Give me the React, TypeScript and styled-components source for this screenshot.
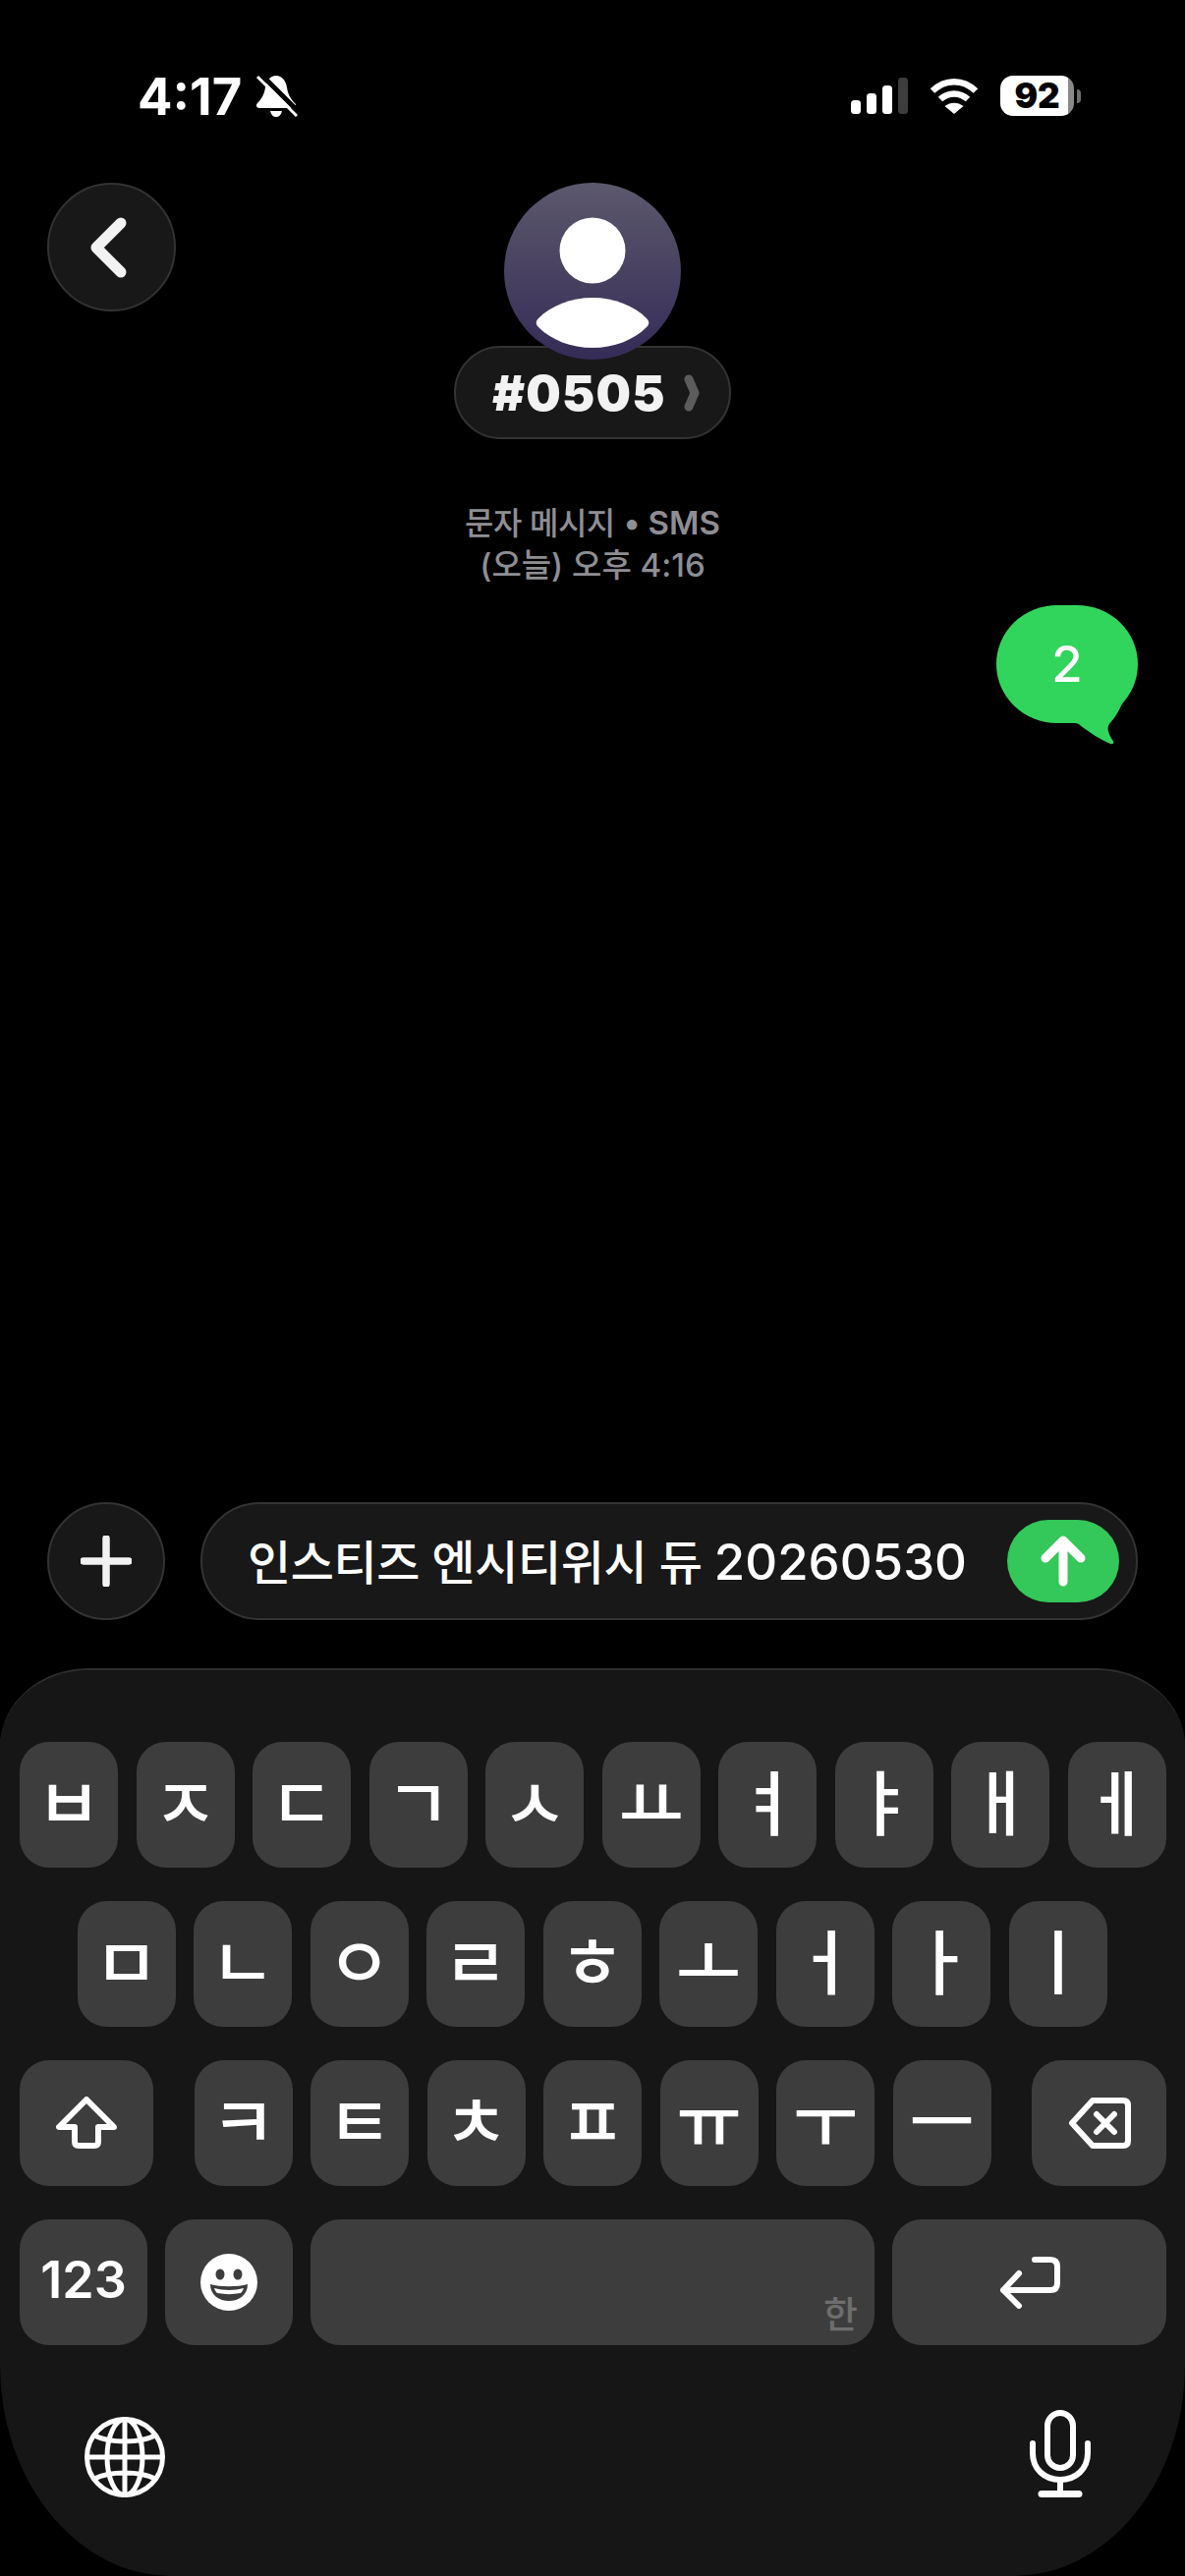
import styled, { createGlobalStyle } from "styled-components";

const row1 = ["ㅂ", "ㅈ", "ㄷ", "ㄱ", "ㅅ", "ㅛ", "ㅕ", "ㅑ", "ㅐ", "ㅔ"];
const row2 = ["ㅁ", "ㄴ", "ㅇ", "ㄹ", "ㅎ", "ㅗ", "ㅓ", "ㅏ", "ㅣ"];
const row3 = ["ㅋ", "ㅌ", "ㅊ", "ㅍ", "ㅠ", "ㅜ", "ㅡ"];

export default function App() {
    return (
        <>
            <GlobalStyle />
            <Page>
                <StatusBar>
                    <StatusLeft>
                        <Clock>4:17</Clock>
                        <svg width="44" height="44" viewBox="0 0 44 44">
                            <path fill="#fff" d="M22 1C28 1 32 6 33 13C34 20 37 25 41 29C43 31 42 34 39 34H5C2 34 1 31 3 29C7 25 10 20 11 13C12 6 16 1 22 1Z" />
                            <path fill="#fff" d="M16 37H28C27 41 25 43 22 43C19 43 17 41 16 37Z" />
                            <path stroke="#000" strokeWidth="5" d="M7 0L48 41" />
                            <path stroke="#fff" strokeWidth="3" d="M3 2L43 42" />
                        </svg>
                    </StatusLeft>
                    <StatusRight>
                        <svg width="58" height="37" viewBox="0 0 58 37">
                            <rect x="0" y="23" width="10" height="14" rx="3.5" fill="#fff" />
                            <rect x="16" y="16" width="10" height="21" rx="3.5" fill="#fff" />
                            <rect x="32" y="8" width="10" height="29" rx="3.5" fill="#fff" />
                            <rect x="48" y="0" width="10" height="37" rx="3.5" fill="#3d3d3d" />
                        </svg>
                        <svg width="50" height="37" viewBox="0 0 50 37">
                            <path fill="none" stroke="#fff" strokeWidth="6.5" d="M3 13.5C16 1 34 1 47 13.5" />
                            <path fill="none" stroke="#fff" strokeWidth="6.5" d="M11 22C19 14.500 31 14.500 39 22" />
                            <path fill="#fff" d="M25 37L15.500 29C21 24.500 29 24.500 34.500 29Z" />
                        </svg>
                        <Battery>
                            <BatteryBody>92</BatteryBody>
                            <BatteryCap />
                        </Battery>
                    </StatusRight>
                </StatusBar>

                <Header>
                    <RoundButton $size={131}>
                        <svg width="48" height="72" viewBox="0 0 48 72">
                            <path d="M33 11L8 36L33 61" fill="none" stroke="#f2f2f2" strokeWidth="11" strokeLinecap="round" strokeLinejoin="round" />
                        </svg>
                    </RoundButton>
                    <Contact>
                        <Avatar>
                            <svg width="180" height="180" viewBox="0 0 180 180">
                                <circle cx="90" cy="69" r="33.500" fill="#fff" />
                                <path fill="#fff" d="M35 138C48 125 68 117 90 117C112 117 132 125 145 138C148 141 148 144 145 147C132 160 112 168 90 168C68 168 48 160 35 147C32 144 32 141 35 138Z" />
                            </svg>
                        </Avatar>
                        <NamePill>
                            <Name>#0505</Name>
                            <svg width="16" height="38" viewBox="0 0 16 38">
                                <path d="M5 5L11 19L5 33" fill="none" stroke="#5c5c5c" strokeWidth="9" strokeLinecap="round" strokeLinejoin="round" />
                            </svg>
                        </NamePill>
                    </Contact>
                    <span />
                </Header>

                <Thread>
                    <Meta>
                        <MetaHangul>문자 메시지</MetaHangul> <MetaBold>• SMS</MetaBold>
                        <br />
                        (오늘) 오후 4:16
                    </Meta>
                    <Bubble>
                        2
                        <BubbleTail width="60" height="60" viewBox="0 0 60 60">
                            <path fill="#32d55c" d="M0 20V23H9C11 23.500 12 24 13 25C22 32 34 40 44 44C47 45 48 43 47 41.500C42 34 40 28 43 24C46 20 50 17 57 1L20 0Z" />
                        </BubbleTail>
                    </Bubble>
                </Thread>

                <Composer>
                    <RoundButton $size={120}>
                        <svg width="52" height="52" viewBox="0 0 52 52">
                            <path d="M26 3V49M3 26H49" fill="none" stroke="#f2f2f2" strokeWidth="7.500" strokeLinecap="round" />
                        </svg>
                    </RoundButton>
                    <InputBox>
                        <InputText>
                            <InputHangul>인스티즈 엔시티위시 듀 </InputHangul>20260530
                        </InputText>
                        <SendButton>
                            <svg width="46" height="52" viewBox="0 0 46 52">
                                <path d="M23 47V6M5 23L23 5L41 23" fill="none" stroke="#fff" strokeWidth="9" strokeLinecap="round" strokeLinejoin="round" />
                            </svg>
                        </SendButton>
                    </InputBox>
                </Composer>

                <Keyboard>
                    <KeyRows>
                        <KeyRow>
                            {row1.map((k) => (
                                <Key key={k}><Jamo>{k}</Jamo></Key>
                            ))}
                        </KeyRow>
                        <KeyRow $center>
                            {row2.map((k) => (
                                <Key key={k}><Jamo>{k}</Jamo></Key>
                            ))}
                        </KeyRow>
                        <KeyRow>
                            <Key $w={136}>
                                <svg width="62" height="54" viewBox="0 0 62 54">
                                    <path d="M31 3L3 31H19V46Q19 50 23 50H39Q43 50 43 46V31H59Z" fill="none" stroke="#fff" strokeWidth="6" strokeLinejoin="round" />
                                </svg>
                            </Key>
                            <KeyGroup>
                                {row3.map((k) => (
                                    <Key key={k}><Jamo>{k}</Jamo></Key>
                                ))}
                            </KeyGroup>
                            <Key $w={137}>
                                <svg width="64" height="54" viewBox="0 0 64 54">
                                    <path d="M4 27L25 4H56Q61 4 61 9V45Q61 50 56 50H25Z" fill="none" stroke="#fff" strokeWidth="6" strokeLinejoin="round" />
                                    <path d="M29 18L47 36M47 18L29 36" fill="none" stroke="#fff" strokeWidth="6" strokeLinecap="round" />
                                </svg>
                            </Key>
                        </KeyRow>
                        <KeyRow>
                            <Key $w={130}><KeyLabel>123</KeyLabel></Key>
                            <Key $w={130}>
                                <svg width="58" height="58" viewBox="0 0 58 58">
                                    <circle cx="29" cy="29" r="29" fill="#fff" />
                                    <ellipse cx="20" cy="21" rx="4.500" ry="5.500" fill="#3c3c3c" />
                                    <ellipse cx="38" cy="21" rx="4.500" ry="5.500" fill="#3c3c3c" />
                                    <path d="M10 31C20 34 38 34 48 31C48 42 39 48 29 48C19 48 10 42 10 31Z" fill="#3c3c3c" />
                                    <path d="M14 35C23 37.500 35 37.500 44 35C43 38 42 39 41 40C33 41.500 25 41.500 17 40C16 39 15 38 14 35Z" fill="#fff" />
                                </svg>
                            </Key>
                            <SpaceKey $w={574}>한</SpaceKey>
                            <Key $w={279}>
                                <svg width="64" height="54" viewBox="0 0 64 54">
                                    <path d="M37 4H53Q60 4 60 11V28Q60 35 53 35H5M21 18L5 35L21 51" fill="none" stroke="#fff" strokeWidth="6" strokeLinecap="round" strokeLinejoin="round" />
                                </svg>
                            </Key>
                        </KeyRow>
                    </KeyRows>
                    <KeyboardFooter>
                        <svg width="82" height="82" viewBox="0 0 82 82">
                            <g fill="none" stroke="#fff" strokeWidth="5">
                                <circle cx="41" cy="41" r="38.500" />
                                <ellipse cx="41" cy="41" rx="18" ry="38.500" />
                                <path d="M41 3V79M3 41H79M10 19C26 27 56 27 72 19M10 63C26 55 56 55 72 63" />
                            </g>
                        </svg>
                        <svg width="62" height="89" viewBox="0 0 62 89">
                            <g fill="none" stroke="#fff" strokeWidth="6" strokeLinecap="round">
                                <rect x="18" y="3" width="26" height="56" rx="13" />
                                <path d="M3 34V44C3 60 15 71 31 71C47 71 59 60 59 44V34" />
                                <path d="M31 71V84" />
                                <path d="M12 85.500H50" strokeWidth="7" />
                            </g>
                        </svg>
                    </KeyboardFooter>
                </Keyboard>
            </Page>
        </>
    );
}

const GlobalStyle = createGlobalStyle`
    html, body {
        margin: 0;
        padding: 0;
        background: #000;
    }
    * {
        box-sizing: border-box;
    }
`;

const sans = `Inter, "Noto Sans CJK KR", sans-serif`;

const Page = styled.div`
    width: 1206px;
    height: 2622px;
    display: flex;
    flex-direction: column;
    overflow: hidden;
    background: #000;
    color: #fff;
    font-family: ${sans};
`;

const StatusBar = styled.div`
    height: 186px;
    padding: 74px 106px 0 140px;
    display: flex;
    justify-content: space-between;
    align-items: flex-start;
`;

const StatusLeft = styled.div`
    display: flex;
    align-items: center;
    gap: 13px;
`;

const Clock = styled.div`
    font-size: 52.5px;
    line-height: 48px;
    font-weight: 700;
`;

const StatusRight = styled.div`
    display: flex;
    align-items: center;
    gap: 22px;
    padding-top: 3px;
`;

const Battery = styled.div`
    display: flex;
    align-items: center;
    gap: 3px;
`;

const BatteryBody = styled.div`
    width: 75px;
    height: 41px;
    border-radius: 13px;
    background: linear-gradient(90deg, #fff 92%, #8a8a8a 92%);
    color: #000;
    font-size: 35px;
    line-height: 41px;
    font-weight: 900;
    text-align: center;
`;

const BatteryCap = styled.div`
    width: 4px;
    height: 14px;
    border-radius: 0 4px 4px 0;
    background: #6e6e6e;
`;

const Header = styled.div`
    padding: 0 48px;
    display: grid;
    grid-template-columns: 131px 1fr 131px;
    align-items: start;
`;

const RoundButton = styled.div<{ $size: number }>`
    width: ${({ $size }) => $size}px;
    height: ${({ $size }) => $size}px;
    flex: none;
    border-radius: 50%;
    background: #181818;
    border: 2px solid #333;
    display: flex;
    align-items: center;
    justify-content: center;
`;

const Contact = styled.div`
    display: flex;
    flex-direction: column;
    align-items: center;
`;

const Avatar = styled.div`
    width: 180px;
    height: 180px;
    border-radius: 50%;
    background: linear-gradient(180deg, #5c586c 0%, #352c57 100%);
    position: relative;
    z-index: 1;
    overflow: hidden;
`;

const NamePill = styled.div`
    width: 282px;
    height: 95px;
    margin-top: -14px;
    border-radius: 48px;
    background: #181818;
    border: 2px solid #333;
    padding: 0 30px 0 37px;
    display: flex;
    align-items: center;
    justify-content: space-between;
`;

const Name = styled.div`
    font-size: 50px;
    line-height: 1;
    font-weight: 900;
    letter-spacing: 1.2px;
    color: #f2f2f2;
`;

const Thread = styled.div`
    flex: 1;
    display: flex;
    flex-direction: column;
    padding: 64px 48px 0;
`;

const Meta = styled.div`
    font-size: 33px;
    line-height: 43px;
    font-weight: 500;
    color: #8e8e93;
    text-align: center;
`;

const MetaHangul = styled.span`
    font-size: 32px;
    letter-spacing: -0.5px;
`;

const MetaBold = styled.span`
    font-weight: 600;
`;

const Bubble = styled.div`
    align-self: flex-end;
    position: relative;
    margin-top: 19px;
    width: 144px;
    height: 120px;
    border-radius: 62px / 60px;
    background: #32d55c;
    font-size: 51px;
    font-weight: 500;
    line-height: 120px;
    text-align: center;
`;

const BubbleTail = styled.svg`
    position: absolute;
    left: 72px;
    top: 97px;
`;

const Composer = styled.div`
    padding: 0 48px;
    display: flex;
    gap: 36px;
`;

const InputBox = styled.div`
    flex: 1;
    height: 120px;
    border-radius: 60px;
    background: #181818;
    border: 2px solid #333;
    padding: 0 17px 0 46px;
    display: flex;
    align-items: center;
    justify-content: space-between;
`;

const InputText = styled.div`
    font-size: 51px;
    line-height: 1;
    font-weight: 500;
    white-space: nowrap;
`;

const InputHangul = styled.span`
    font-size: 48px;
    letter-spacing: -0.4px;
`;

const SendButton = styled.div`
    width: 114px;
    height: 84px;
    border-radius: 42px;
    background: #34c759;
    display: flex;
    align-items: center;
    justify-content: center;
`;

const Keyboard = styled.div`
    height: 924px;
    margin-top: 49px;
    background: #161616;
    border-top: 2px solid #2e2e2e;
    border-radius: 90px 90px 175px 175px / 80px 80px 215px 215px;
    padding: 73px 19px 0 20px;
    display: flex;
    flex-direction: column;
`;

const KeyRows = styled.div`
    display: flex;
    flex-direction: column;
    gap: 34px;
`;

const KeyRow = styled.div<{ $center?: boolean }>`
    display: flex;
    justify-content: ${({ $center }) => ($center ? "center" : "space-between")};
    gap: ${({ $center }) => ($center ? 18.5 : 18)}px;
    margin-right: ${({ $center }) => ($center ? 2 : 0)}px;
`;

const KeyGroup = styled.div`
    display: flex;
    gap: 18.5px;
`;

const Key = styled.div<{ $w?: number }>`
    width: ${({ $w }) => $w ?? 100}px;
    height: 128px;
    flex: none;
    border-radius: 30px;
    background: #3d3d3d;
    display: flex;
    align-items: center;
    justify-content: center;
`;

const Jamo = styled.span`
    font-family: "Noto Sans CJK KR", sans-serif;
    font-size: 72px;
    line-height: 1;
    font-weight: 500;
    margin-bottom: 12px;
`;

const KeyLabel = styled.span`
    font-size: 52px;
    line-height: 1;
    font-weight: 600;
    margin-bottom: 4px;
`;

const SpaceKey = styled(Key)`
    align-items: flex-end;
    justify-content: flex-end;
    padding: 0 17px 8px 0;
    font-size: 38px;
    font-weight: 500;
    line-height: 1.2;
    color: #6e6e6e;
`;

const KeyboardFooter = styled.div`
    margin-top: 66px;
    padding: 0 77px 0 66px;
    display: flex;
    justify-content: space-between;
    align-items: flex-end;
`;
